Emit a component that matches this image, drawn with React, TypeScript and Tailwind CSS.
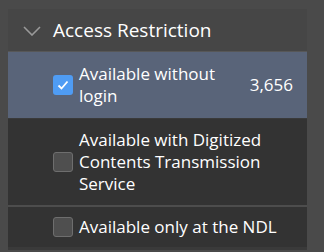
export default function App() {
  const items = [
    { label: "Available without login", count: "3,656", checked: true },
    { label: "Available with Digitized Contents Transmission Service", checked: false },
    { label: "Available only at the NDL", checked: false },
  ];

  const rowStyles = [
    "py-[11px] bg-[#596479]",
    "py-[10px] bg-[#333333] border-t border-[#3a3a3a]",
    "py-[9px] bg-[#333333] border-t-2 border-[#4d4d4d]",
  ];

  return (
    <div className="w-[324px] h-[252px] bg-[#4a4a4a] pt-[9px] pl-2 pr-[17px] font-['Open_Sans',sans-serif] text-white">
      <div className="bg-[#333333] border-b-[3px] border-[#3a3a3a]">
        <div className="h-[43px] bg-[#464646] flex items-center pl-[15px] border-b border-[#575757]">
          <svg width="18" height="10" viewBox="0 0 18 10" className="mr-[12px] mt-[1px]">
            <path d="M1 1 L9 9 L17 1" fill="none" stroke="#9a9a9a" strokeWidth="1.6" />
          </svg>
          <span className="text-[19px] leading-none">Access Restriction</span>
        </div>
        {items.map((item, i) => (
          <div key={i} className={"flex items-center pl-[45px] pr-[14px] " + rowStyles[i]}>
            <span
              className={
                "w-[20px] h-[20px] rounded-[3px] shrink-0 flex items-center justify-center " +
                (item.checked ? "bg-[#4f9cf4]" : "bg-[#4f4f4f] border border-[#6e6e6e]")
              }
            >
              {item.checked && (
                <svg width="14" height="14" viewBox="0 0 14 14">
                  <path d="M2.5 7.5 L5.5 10.5 L11.5 3.5" fill="none" stroke="white" strokeWidth="1.8" />
                </svg>
              )}
            </span>
            <span className="ml-[6px] text-[17px] leading-[22px] flex-1 min-w-0">{item.label}</span>
            {item.count && (
              <span className="text-[17px] leading-[22px] w-[70px] text-right shrink-0">{item.count}</span>
            )}
          </div>
        ))}
      </div>
    </div>
  );
}
